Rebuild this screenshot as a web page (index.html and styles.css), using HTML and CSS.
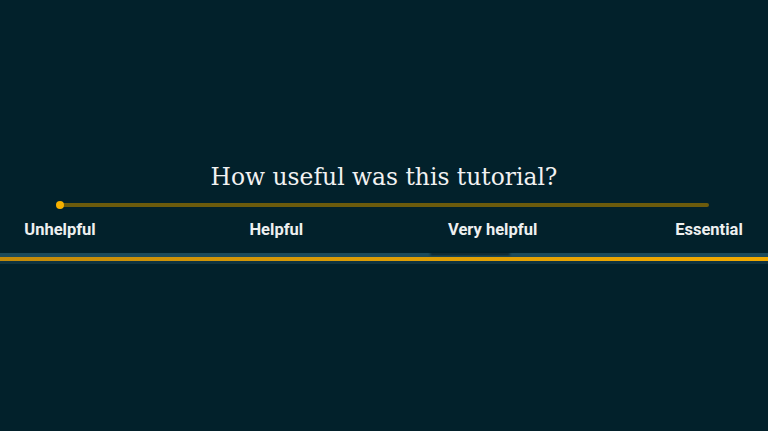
FILE: index.html
```html
<!DOCTYPE html>
<html lang="en">
<head>
<meta charset="utf-8">
<title>Tutorial rating</title>
<link rel="stylesheet" href="styles.css">
</head>
<body>
<main class="page">
  <h1 class="title">How useful was this tutorial?</h1>
  <div class="slider">
    <div class="track"></div>
    <span class="thumb"></span>
  </div>
  <div class="labels">
    <span class="label"><span>Unhelpful</span></span>
    <span class="label"><span>Helpful</span></span>
    <span class="label"><span>Very helpful</span></span>
    <span class="label"><span>Essential</span></span>
  </div>
  <div class="bar">
    <div class="bar-top"><span class="smudge"></span></div>
    <div class="bar-line"></div>
    <div class="bar-bottom"></div>
  </div>
</main>
</body>
</html>
```

FILE: styles.css
```css
html, body {
  margin: 0;
  padding: 0;
  background: #02212b;
}
.page {
  width: 768px;
  height: 431px;
  box-sizing: border-box;
  padding-top: 162px;
  display: flex;
  flex-direction: column;
  overflow: hidden;
}
.title {
  margin: 0;
  font-family: "DejaVu Serif", "Liberation Serif", serif;
  font-weight: normal;
  font-size: 23.4px;
  line-height: 31px;
  color: #f2f2f2;
  text-align: center;
}
.slider {
  position: relative;
  margin: 8px 59px 0 60px;
  height: 8px;
  display: flex;
  align-items: center;
}
.track {
  flex: 1;
  height: 4px;
  border-radius: 2px;
  background: #6c5b0c;
}
.thumb {
  position: absolute;
  left: -4px;
  top: 0;
  width: 8px;
  height: 8px;
  border-radius: 50%;
  background: #f6b100;
}
.labels {
  margin: 11px 59px 0 60px;
  display: flex;
  justify-content: space-between;
}
.label {
  width: 0;
  display: flex;
  justify-content: center;
  white-space: nowrap;
  font-family: Roboto, "Liberation Sans", sans-serif;
  font-weight: 700;
  font-size: 16.5px;
  line-height: 20px;
  color: #eef0f0;
}
.bar {
  margin-top: 13px;
  display: flex;
  flex-direction: column;
}
.bar-top {
  position: relative;
  height: 4px;
  background: #1d4b5a;
}
.smudge {
  position: absolute;
  left: 430px;
  top: 0;
  width: 80px;
  height: 2px;
  border-radius: 2px;
  background: #06161c;
  filter: blur(1px);
}
.bar-line {
  height: 4px;
  background: linear-gradient(to right, #c28a0a, #dc9d06 50%, #f2aa00);
}
.bar-bottom {
  height: 3px;
  background: #0f3340;
}
```
